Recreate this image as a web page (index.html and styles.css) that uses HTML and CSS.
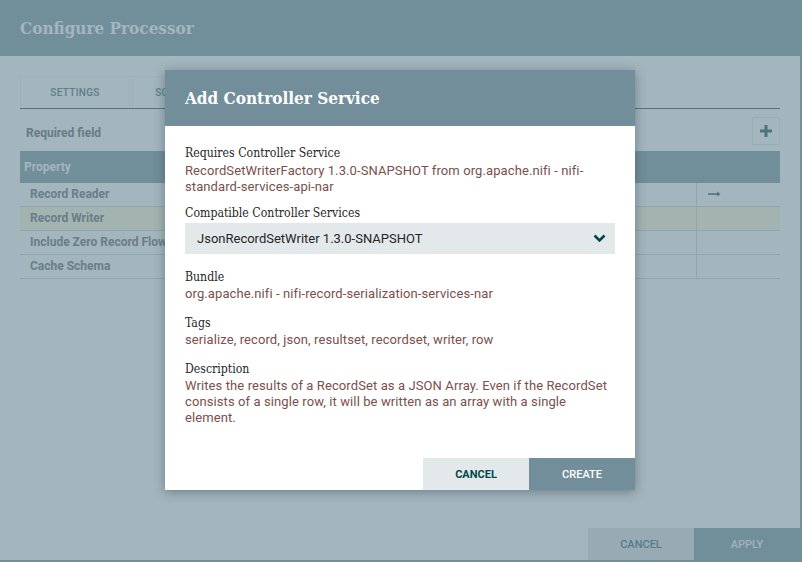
FILE: index.html
```html
<!DOCTYPE html>
<html>
<head>
<meta charset="utf-8">
<link rel="stylesheet" href="styles.css">
</head>
<body>
<div class="window">
  <div class="cp-header">Configure Processor</div>
  <div class="cp-body">
    <div class="tabs">
      <div class="tab">SETTINGS</div>
      <div class="tab">SCHEDULING</div>
    </div>
    <div class="req-row">
      <span class="req">Required field</span>
      <span class="add-btn"><svg width="14" height="14" viewBox="0 0 14 14"><path d="M5.5 1h3v4.5H13v3H8.5V13h-3V8.5H1v-3h4.5z" fill="#4d7380"/></svg></span>
    </div>
    <div class="table">
      <div class="thead"><span class="c1">Property</span><span class="c2"></span></div>
      <div class="row"><span class="c1">Record Reader</span><span class="c2"><svg class="arrow" width="13" height="6" viewBox="0 0 13 6"><path d="M0 3h10" stroke="#4f7380" stroke-width="1.6"/><path d="M9 0.5 L12.5 3 L9 5.5z" fill="#4f7380"/></svg></span></div>
      <div class="row sel"><span class="c1">Record Writer</span><span class="c2"></span></div>
      <div class="row"><span class="c1">Include Zero Record FlowFiles</span><span class="c2"></span></div>
      <div class="row"><span class="c1">Cache Schema</span><span class="c2"></span></div>
    </div>
    <div class="cp-footer">
      <div class="btn-cancel-bg">CANCEL</div>
      <div class="btn-apply-bg">APPLY</div>
    </div>
  </div>

  <div class="dialog">
    <div class="dlg-header">Add Controller Service</div>
    <div class="dlg-body">
      <div class="sec first">
        <div class="label">Requires Controller Service</div>
        <div class="value">RecordSetWriterFactory 1.3.0-SNAPSHOT from org.apache.nifi - nifi-standard-services-api-nar</div>
      </div>
      <div class="sec combo-sec">
        <div class="label">Compatible Controller Services</div>
        <div class="combo">
          <span>JsonRecordSetWriter 1.3.0-SNAPSHOT</span>
          <svg width="13" height="9" viewBox="0 0 13 9"><path d="M1.5 1.5 L6.5 6.5 L11.5 1.5" fill="none" stroke="#004849" stroke-width="2.6"/></svg>
        </div>
      </div>
      <div class="sec">
        <div class="label">Bundle</div>
        <div class="value">org.apache.nifi - nifi-record-serialization-services-nar</div>
      </div>
      <div class="sec">
        <div class="label">Tags</div>
        <div class="value">serialize, record, json, resultset, recordset, writer, row</div>
      </div>
      <div class="sec">
        <div class="label">Description</div>
        <div class="value">Writes the results of a RecordSet as a JSON Array. Even if the RecordSet consists of a single row, it will be written as an array with a single element.</div>
      </div>
    </div>
    <div class="dlg-footer">
      <div class="btn cancel">CANCEL</div>
      <div class="btn create">CREATE</div>
    </div>
  </div>
</div>
</body>
</html>
```

FILE: styles.css
```css
* { box-sizing: border-box; }
html, body { margin: 0; padding: 0; }
body {
  background: #718e9b;
  width: 802px;
  height: 562px;
  overflow: hidden;
  font-family: Roboto, "Liberation Sans", sans-serif;
}
.window {
  position: relative;
  width: 800px;
  height: 560px;
  display: flex;
  flex-direction: column;
}
.cp-header {
  height: 56px;
  background: #718e9b;
  color: #a4b6be;
  font-family: "DejaVu Serif Condensed", "DejaVu Serif", serif;
  font-weight: bold;
  font-size: 17px;
  padding: 18px 0 0 20px;
}
.cp-body {
  flex: 1;
  background: #a3b5bd;
  display: flex;
  flex-direction: column;
  padding: 20px 20px 0 20px;
}
.tabs {
  display: flex;
  gap: 2px;
  height: 33px;
  border-bottom: 1px solid #4e7583;
}
.tab {
  width: 110px;
  height: 32px;
  border: 1px solid #9db1ba;
  border-bottom: none;
  color: #5b7f8b;
  font-size: 10px;
  font-weight: 500;
  letter-spacing: 0.3px;
  display: flex;
  align-items: center;
  justify-content: center;
}
.req-row {
  display: flex;
  justify-content: space-between;
  align-items: center;
  height: 42px;
  padding-left: 6px;
}
.req {
  color: #677c86;
  font-size: 12px;
  font-weight: bold;
  margin-top: 5px;
}
.add-btn {
  width: 28px;
  height: 28px;
  border: 1px solid #98adb6;
  display: flex;
  align-items: center;
  justify-content: center;
  margin-top: 2px;
}
.table { display: flex; flex-direction: column; }
.thead {
  display: flex;
  height: 32px;
  background: #718e9b;
  align-items: center;
}
.thead .c1 {
  color: #a4b6be;
  font-weight: bold;
  font-size: 12px;
  padding-left: 4px;
}
.row {
  display: flex;
  height: 24px;
  border-bottom: 1px solid #8fa5af;
}
.row.sel { background: #a3b3b0; }
.c1 {
  width: 676px;
  display: flex;
  align-items: center;
  padding-left: 10px;
  padding-bottom: 1px;
  color: #6a7e88;
  font-weight: bold;
  font-size: 12px;
  white-space: nowrap;
  overflow: hidden;
}
.c2 {
  flex: 1;
  display: flex;
  align-items: center;
}
.row .c2 { border-left: 1px solid #8fa5af; }
.arrow { margin-left: 11px; margin-top: -1px; }
.cp-footer {
  margin-top: auto;
  margin-right: -20px;
  display: flex;
  justify-content: flex-end;
}
.btn-cancel-bg, .btn-apply-bg {
  width: 106px;
  height: 32px;
  display: flex;
  align-items: center;
  justify-content: center;
  font-size: 11px;
  font-weight: 500;
}
.btn-cancel-bg { background: #98abb4; color: #557c87; }
.btn-apply-bg { background: #718e9b; color: #a1b4bc; }

/* dialog overlay */
.dialog {
  position: absolute;
  left: 165px;
  top: 70px;
  width: 470px;
  height: 420px;
  background: #fff;
  box-shadow: 0 2px 10px rgba(40, 60, 70, 0.45);
  display: flex;
  flex-direction: column;
}
.dlg-header {
  height: 56px;
  background: #728e9b;
  color: #fff;
  font-family: "DejaVu Serif Condensed", "DejaVu Serif", serif;
  font-weight: bold;
  font-size: 17px;
  padding: 18px 0 0 20px;
}
.dlg-body {
  flex: 1;
  padding: 19px 20px 0 20px;
}
.sec { margin-bottom: 13px; }
.sec.first { margin-bottom: 10px; }
.sec.combo-sec { margin-bottom: 15px; }
.label {
  font-family: "DejaVu Serif Condensed", "DejaVu Serif", serif;
  font-size: 12.2px;
  line-height: 16px;
  color: #262626;
}
.value {
  margin-top: 1px;
  font-size: 13px;
  line-height: 16px;
  letter-spacing: 0.1px;
  color: #7a4f4c;
}
.sec.first .value { margin-top: 2px; }
.combo {
  margin-top: 2px;
  height: 31px;
  background: #e3e8eb;
  display: flex;
  align-items: center;
  justify-content: space-between;
  padding: 0 9px 0 12px;
  font-size: 13px;
  color: #262626;
}
.dlg-footer {
  display: flex;
  justify-content: flex-end;
}
.btn {
  width: 106px;
  height: 32px;
  display: flex;
  align-items: center;
  justify-content: center;
  font-size: 11px;
  font-weight: bold;
}
.btn.cancel { background: #e3e8eb; color: #004849; }
.btn.create { background: #728e9b; color: #fff; font-weight: 500; }
```
